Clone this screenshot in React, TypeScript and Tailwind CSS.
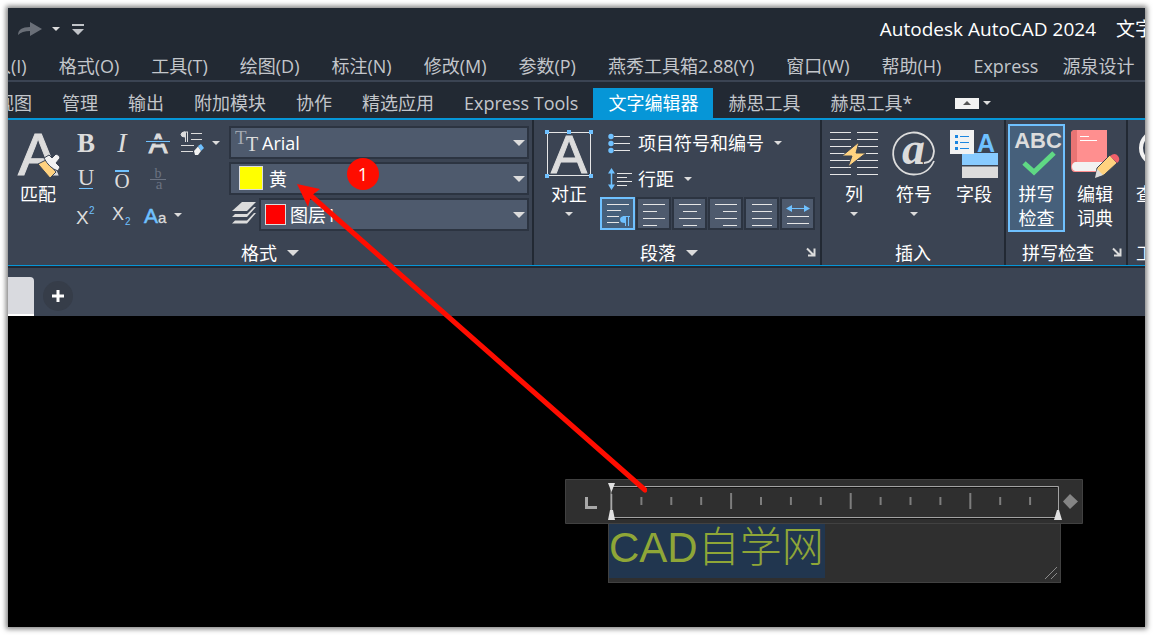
import type { ReactNode } from 'react'
import clsx from 'clsx'

const menus = ['插入(I)', '格式(O)', '工具(T)', '绘图(D)', '标注(N)', '修改(M)', '参数(P)', '燕秀工具箱2.88(Y)', '窗口(W)', '帮助(H)', 'Express']

const tabs = ['视图', '管理', '输出', '附加模块', '协作', '精选应用', 'Express Tools', '文字编辑器', '赫思工具', '赫思工具*']

const SANS = 'Liberation Sans, Arial, sans-serif'
const SERIF = 'Liberation Serif, Times New Roman, serif'

function Caret({ large = false, className }: { large?: boolean; className?: string }) {
  return (
    <svg
      aria-hidden="true"
      viewBox="0 0 12 6"
      className={clsx('shrink-0 fill-[#dcdcdc]', large ? 'w-3 h-1.5' : 'w-2 h-1', className)}
    >
      <path d="M0 0H12L6 6Z" />
    </svg>
  )
}

function Launcher() {
  return (
    <button type="button" aria-label="更多设置" className="absolute right-1 bottom-2 w-2.5 h-2.5">
      <svg viewBox="0 0 10 10" className="w-2.5 h-2.5" fill="none" stroke="#dcdcdc" strokeWidth="2">
        <path d="M1 1.5L7.5 8M8.5 1.5V8.5H2" />
      </svg>
    </button>
  )
}

function Panel({ title, caret, launcher, className, children }: {
  title: string
  caret?: boolean
  launcher?: boolean
  className?: string
  children: ReactNode
}) {
  return (
    <section className={clsx('relative flex flex-col shrink-0 h-[145px] pt-1', className)}>
      <div className="flex flex-1 items-start">{children}</div>
      <div className={clsx('flex items-center justify-center gap-2.5 h-6 leading-6 text-white', launcher && 'pr-4')}>
        <span className="whitespace-nowrap">{title}</span>
        {caret && <Caret large />}
      </div>
      {launcher && <Launcher />}
    </section>
  )
}

function LargeButton({ icon, lines, caret, active, className }: {
  icon: ReactNode
  lines: string[]
  caret?: boolean
  active?: boolean
  className?: string
}) {
  return (
    <button
      type="button"
      className={clsx(
        'flex flex-col items-center shrink-0 h-[108px] pt-1 border-2',
        active ? 'border-[#6fc1ff] bg-[#46607b]' : 'border-transparent',
        className,
      )}
    >
      {icon}
      <span className="flex flex-col mt-1 leading-6 text-white whitespace-nowrap">
        {lines.map((line) => (
          <span key={line}>{line}</span>
        ))}
      </span>
      {caret && <Caret className="mt-1.5" />}
    </button>
  )
}

function Big({ children }: { children: ReactNode }) {
  return (
    <svg aria-hidden="true" viewBox="0 0 48 48" className="w-12 h-12 shrink-0 overflow-visible">
      {children}
    </svg>
  )
}

function Tool({ label, children }: { label: string; children: ReactNode }) {
  return (
    <button type="button" aria-label={label} className="flex items-center justify-center h-9">
      <svg aria-hidden="true" viewBox="0 0 24 24" className="w-6 h-6 overflow-visible" fill="#dcdcdc">
        {children}
      </svg>
    </button>
  )
}

function Combo({ id, label, value, icon, pad }: {
  id: string
  label: string
  value: string
  icon?: ReactNode
  pad: string
}) {
  return (
    <div className="relative grow shrink-0 h-[33px]">
      <label htmlFor={id} className="sr-only">{label}</label>
      <select
        id={id}
        className={clsx('w-full h-full appearance-none border-2 border-[#2c3441] bg-[#4e5a6d] text-white leading-6', pad)}
      >
        <option>{value}</option>
      </select>
      {icon}
      <Caret large className="absolute right-1 top-3.5 pointer-events-none" />
    </div>
  )
}

function AlignButton({ label, active, children }: { label: string; active?: boolean; children: ReactNode }) {
  return (
    <button
      type="button"
      aria-label={label}
      className={clsx(
        'flex items-center justify-center w-[35px] h-[33px] border-2',
        active ? 'border-[#6fc1ff] bg-[#46607b]' : 'border-[#2c3441] bg-[#4e5a6d]',
      )}
    >
      <svg aria-hidden="true" viewBox="0 0 24 24" className="w-6 h-6 shrink-0" stroke="#e6e6e6" fill="none">
        {children}
      </svg>
    </button>
  )
}

function FormatPanel() {
  return (
    <Panel title="格式" caret className="w-[526px]">
      <LargeButton
        className="w-[60px]"
        lines={['匹配']}
        icon={
          <Big>
            <text x="4" y="45" fontFamily={SANS} fontSize="60" fill="#dcdcdc" stroke="#dcdcdc">A</text>
            <path d="M24 34L32 30L42 42L36 48Z" fill="#ffd27f" stroke="#3b4453" />
            <path d="M30 28L35 25L38 28L42 24Q46 25 46 28L42 33L46 37L44 41Q35 38 30 28Z" fill="#f2f2f2" stroke="#3b4453" />
          </Big>
        }
      />
      <div className="grid grid-cols-[36px_36px_36px_53px] pt-px">
        <Tool label="粗体">
          <text x="12" y="21" textAnchor="middle" fontFamily={SERIF} fontSize="27" fontWeight="700">B</text>
        </Tool>
        <Tool label="斜体">
          <text x="12" y="21" textAnchor="middle" fontFamily={SERIF} fontSize="28" fontStyle="italic">I</text>
        </Tool>
        <Tool label="删除线">
          <text x="12" y="22" textAnchor="middle" fontFamily={SANS} fontSize="28" stroke="#dcdcdc">A</text>
          <path d="M0 8.5H24V12.5H0Z" fill="#3b4453" />
          <path d="M0 10H24V11H0Z" fill="#6fc1ff" />
        </Tool>
        <button type="button" aria-label="清除格式" className="flex items-center gap-2 h-9 pl-1">
          <svg aria-hidden="true" viewBox="0 0 24 24" className="w-6 h-6 shrink-0" fill="none" stroke="#dcdcdc">
            <path d="M3.5 1H8M5.500 1V11M7.500 1V11M11 2.500H22M11 8.500H22M1 14.500H14M1 20.500H13" />
            <path d="M5 1Q1 1 1 3.500T5 6Z" fill="#dcdcdc" />
            <path d="M18 15L21 13L24 17L21 20Z" fill="#6fc1ff" stroke="none" />
            <path d="M14 20L18 15.500L21 20L18 24H15Z" fill="#f2f2f2" stroke="none" />
          </svg>
          <Caret />
        </button>
        <Tool label="下划线">
          <text x="12" y="18" textAnchor="middle" fontFamily={SERIF} fontSize="23">U</text>
          <path d="M5 21H19V22H5Z" fill="#6fc1ff" />
        </Tool>
        <Tool label="上划线">
          <text x="12" y="21" textAnchor="middle" fontFamily={SERIF} fontSize="21">O</text>
          <path d="M5 3H19V5H5Z" fill="#6fc1ff" />
        </Tool>
        <Tool label="堆叠">
          <g fill="#6b7382">
            <text x="12" y="11" textAnchor="middle" fontFamily={SERIF} fontSize="14">b</text>
            <path d="M4 12H20V13H4Z" />
            <text x="13" y="22" textAnchor="middle" fontFamily={SERIF} fontSize="15">a</text>
          </g>
        </Tool>
        <span />
        <Tool label="上标">
          <text x="2" y="21" fontFamily={SANS} fontSize="19">X</text>
          <text x="15" y="11" fontFamily={SANS} fontSize="10" fill="#6fc1ff">2</text>
        </Tool>
        <Tool label="下标">
          <text x="2" y="17" fontFamily={SANS} fontSize="18">X</text>
          <text x="15" y="22" fontFamily={SANS} fontSize="10" fill="#6fc1ff">2</text>
        </Tool>
        <button type="button" aria-label="更改大小写" className="flex items-center gap-1.5 h-9 pl-1">
          <svg aria-hidden="true" viewBox="0 0 24 24" className="w-6 h-6 shrink-0 overflow-visible">
            <text x="0" y="20" fontFamily={SANS} fontSize="21" fill="#6fc1ff" stroke="#6fc1ff" strokeWidth="0.5">A</text>
            <text x="14" y="20" fontFamily={SANS} fontSize="15" fill="#dcdcdc" stroke="#dcdcdc" strokeWidth="0.3">a</text>
          </svg>
          <Caret />
        </button>
      </div>
      <div className="flex flex-col flex-1 gap-[3px] pt-0.5 pr-[3px]">
        <Combo
          id="font"
          label="字体"
          value="Arial"
          pad="pl-[31px]"
          icon={
            <svg aria-hidden="true" viewBox="0 0 24 24" className="absolute left-1.5 top-1 w-6 h-6 pointer-events-none">
              <text x="0" y="14" fontFamily={SERIF} fontSize="19" fill="#a3a9b3">T</text>
              <text x="11" y="21" fontFamily={SERIF} fontSize="20" fill="#dcdcdc">T</text>
            </svg>
          }
        />
        <Combo
          id="color"
          label="颜色"
          value="黄"
          pad="pl-[38px]"
          icon={<span className="absolute left-2.5 top-1 size-6 border border-[#dcdcdc] bg-[#ffff00] pointer-events-none" />}
        />
        <div className="flex">
          <svg aria-hidden="true" viewBox="0 0 24 24" className="w-6 h-6 mx-[3px] mt-1" fill="#dcdcdc">
            <path d="M10 0H24L15 9H0Z" />
            <path d="M0 15L3 12H15L22 5H24L15 15Z" />
            <path d="M0 21.500L3 18.500H15L22 11H24L15 21.500Z" />
          </svg>
          <Combo
            id="layer"
            label="图层"
            value="图层1"
            pad="pl-[29px]"
            icon={<span className="absolute left-1.5 top-1.5 size-[21px] border border-[#dcdcdc] bg-[#ff0000] pointer-events-none" />}
          />
        </div>
      </div>
    </Panel>
  )
}

function ParagraphPanel() {
  return (
    <Panel title="段落" caret launcher className="w-[288px]">
      <LargeButton
        className="w-[62px] ml-1"
        lines={['对正']}
        caret
        icon={
          <Big>
            <text x="24" y="43" textAnchor="middle" fontFamily={SANS} fontSize="54" fill="#dcdcdc" stroke="#dcdcdc">A</text>
            <path d="M2.500 2.500H45.500V45.500H2.500Z" fill="none" stroke="#e6e6e6" />
            <path d="M0 0h4v4H0zM22 0h4v4h-4zM44 0h4v4h-4zM0 44h4v4H0zM44 44h4v4h-4z" fill="#6fc1ff" />
          </Big>
        }
      />
      <div className="flex flex-col pt-px">
        <button type="button" className="flex items-center h-9 pl-2 text-white">
          <svg aria-hidden="true" viewBox="0 0 24 24" className="w-6 h-6 mr-1.5">
            <path d="M6 5.500H22M6 12.500H22M6 19.500H22" stroke="#e6e6e6" />
            <circle cx="3" cy="5.500" r="2.700" fill="#6fc1ff" />
            <circle cx="3" cy="12.500" r="2.700" fill="#6fc1ff" />
            <circle cx="3" cy="19.500" r="2.700" fill="#6fc1ff" />
          </svg>
          项目符号和编号
          <Caret className="ml-2.5" />
        </button>
        <button type="button" className="flex items-center h-9 pl-2 text-white">
          <svg aria-hidden="true" viewBox="0 0 24 24" className="w-6 h-6 mr-1.5">
            <path d="M9 6.500H24M9 10.500H19M9 14.500H24M9 18.500H19" stroke="#e6e6e6" />
            <path d="M3.500 4V20" stroke="#6fc1ff" strokeWidth="1.500" />
            <path d="M0 6.500L3.500 1L7 6.500ZM0 17.500L3.500 23L7 17.500Z" fill="#6fc1ff" />
          </svg>
          行距
          <Caret className="ml-2.5" />
        </button>
        <div className="flex gap-px">
          <AlignButton label="默认" active>
            <path d="M1 2.500H23M1 8.500H15M1 14.500H13M1 20.500H13" />
            <path d="M17 14.500H24M19.500 15V25M22.500 15V25" stroke="#6fc1ff" />
            <path d="M19 14Q14 14 14 17.500T19 21Z" fill="#6fc1ff" stroke="none" />
          </AlignButton>
          <AlignButton label="左对齐">
            <path d="M1 2.500H23M1 9.500H15M1 16.500H23M1 23.500H15" />
          </AlignButton>
          <AlignButton label="居中">
            <path d="M1 2.500H23M5 9.500H19M1 16.500H23M5 23.500H19" />
          </AlignButton>
          <AlignButton label="右对齐">
            <path d="M1 2.500H23M9 9.500H23M1 16.500H23M9 23.500H23" />
          </AlignButton>
          <AlignButton label="对正">
            <path d="M2 2.500H22M2 9.500H22M2 16.500H22M2 23.500H22" />
          </AlignButton>
          <AlignButton label="分散对齐">
            <path d="M1 14.500H23M1 21.500H23" />
            <path d="M4 6.500H20" stroke="#6fc1ff" />
            <path d="M0 6.500L6 3V10ZM24 6.500L18 3V10Z" fill="#6fc1ff" stroke="none" />
          </AlignButton>
        </div>
      </div>
    </Panel>
  )
}

function InsertPanel() {
  return (
    <Panel title="插入" className="w-[184px]">
      <LargeButton
        className="w-[60px] ml-0.5"
        lines={['列']}
        caret
        icon={
          <Big>
            <path
              d="M0 2.500H21M27 2.500H48M0 9.500H21M27 9.500H48M0 16.500H21M27 16.500H48M0 23.500H21M27 23.500H48M0 30.500H21M27 30.500H48M0 37.500H21M27 37.500H48M0 44.500H21M27 44.500H48"
              stroke="#e6e6e6"
            />
            <path d="M29 12L12 26H22L18 37L36 23H26Z" fill="#ffd27f" stroke="#3b4453" />
          </Big>
        }
      />
      <LargeButton
        className="w-[60px]"
        lines={['符号']}
        caret
        icon={
          <Big>
            <path d="M44 31Q38 44.500 24 44.500A20.500 21 0 1 1 44 21Q43 33 34 33" fill="none" stroke="#dcdcdc" strokeWidth="1.800" />
            <text x="12" y="34" fontFamily={SERIF} fontSize="46" fontWeight="700" fontStyle="italic" fill="#dcdcdc">a</text>
          </Big>
        }
      />
      <LargeButton
        className="w-[60px]"
        lines={['字段']}
        icon={
          <Big>
            <path d="M12 23H48V48H12Z" fill="#dcdcdc" />
            <path d="M12 23H48V35H12Z" fill="#88cbff" />
            <path d="M12 35H48V36.500H12Z" fill="#3b4453" />
            <path d="M0 0H24V24H0Z" fill="#f2f2f2" />
            <path d="M5 5h3v3H5zM5 11h3v3H5zM5 17h3v3H5z" fill="#1c86e0" />
            <path d="M10 6.500H19M10 12.500H19M10 18.500H19" stroke="#1c86e0" />
            <text x="36" y="22" textAnchor="middle" fontFamily={SANS} fontSize="25" fontWeight="700" fill="#6fc1ff">A</text>
          </Big>
        }
      />
    </Panel>
  )
}

function SpellPanel() {
  return (
    <Panel title="拼写检查" launcher className="w-[122px]">
      <LargeButton
        className="w-[57px] ml-0.5"
        active
        lines={['拼写', '检查']}
        icon={
          <Big>
            <text x="25" y="18" textAnchor="middle" fontFamily={SANS} fontSize="22" fontWeight="700" fill="#dcdcdc">ABC</text>
            <path d="M11 33L21 42L41 23" fill="none" stroke="#5fd884" strokeWidth="5" />
          </Big>
        }
      />
      <LargeButton
        className="w-[60px]"
        lines={['编辑', '词典']}
        icon={
          <Big>
            <path d="M4 0H36V42H4Q0 42 0 37V4Q0 0 4 0Z" fill="#ff8f8f" />
            <path d="M4 0H6V32Q1 32 0 37V4Q0 0 4 0Z" fill="#e87474" />
            <path d="M4 32H36V41H4Q1 40 1 36.500T4 32Z" fill="#f2f2f2" />
            <path d="M9 6.500H18M9 10.500H26" stroke="#ffffff" />
            <path d="M24 48L26 38L39 25L46 33L33 45Z" fill="#ffd27f" stroke="#3b4453" />
            <path d="M24 48L26 39L32 45Z" fill="#dcdcdc" />
            <path d="M39 26Q44 22 47 26T46 33Z" fill="#f0606a" />
          </Big>
        }
      />
    </Panel>
  )
}

function Ruler() {
  const ticks = Array.from({ length: 14 }, (_, i) => i + 1)
  return (
    <svg aria-hidden="true" viewBox="0 0 518 45" className="block w-[518px] h-[45px] overflow-visible">
      <path d="M0.500 0.500H517.500V44.500H0.500Z" fill="#2f2f2f" stroke="#414141" />
      <path d="M47 8.500H492M47 39.500H492" stroke="#151515" />
      <path d="M46 7.500H493.500V38.500H46Z" fill="none" stroke="#a3a3a3" />
      <path d="M21.500 18V28.500H32" fill="none" stroke="#a8a8a8" strokeWidth="3" />
      <path d="M46.500 15V33" stroke="#a8a8a8" strokeWidth="1.500" />
      {ticks.map((n) => (
        <path
          key={n}
          d={n % 4 === 0 ? `M${46.500 + n * 29.900} 14V30` : `M${46.500 + n * 29.900} 18V26`}
          stroke="#7d7d7d"
          strokeWidth="2"
        />
      ))}
      <path d="M43 4H50L46.500 13ZM43 41H50L48 31H45ZM489 41H497L494 31H492Z" fill="#e0e0e0" />
      <path d="M505 15L513 22.500L505 30L498 22.500Z" fill="#858585" />
    </svg>
  )
}

export default function App() {
  return (
    <div className="flex min-h-screen p-2 bg-white">
      <div className="relative flex flex-col flex-1 min-w-0 overflow-hidden font-['Open_Sans','Noto_Sans_CJK_SC',sans-serif] text-[18px] leading-6 text-[#c3c6cb] bg-[#222933] shadow-[0_0_5px_2px_rgba(0,0,0,0.5)]">
        {/* Title bar */}
        <header className="flex items-center h-11 pl-2.5 pb-0.5 overflow-hidden whitespace-nowrap">
          <button type="button" aria-label="重做" className="w-6">
            <svg viewBox="0 0 24 14" className="w-6 h-3.5" fill="#6a6f78">
              <path d="M0 13Q0 5 12 5V0L24 7L12 14V9Q4 9 0 13Z" />
            </svg>
          </button>
          <Caret className="ml-2.5" />
          <button type="button" aria-label="自定义快速访问工具栏" className="ml-3">
            <svg viewBox="0 0 12 11" className="w-3 h-[11px]" fill="#c0c3c8">
              <path d="M0 0H12V2H0ZM0 5H12L6 11Z" />
            </svg>
          </button>
          <h1 className="ml-auto text-[19px] text-white">Autodesk AutoCAD 2024</h1>
          <span className="w-[29px] ml-5 text-[19px] text-white">文字</span>
        </header>

        {/* Menu bar */}
        <nav className="flex items-center h-[30px] -ml-[33px] pb-px gap-8 border-b-2 border-[#3b4453] whitespace-nowrap">
          {menus.map((menu) => (
            <button type="button" key={menu}>{menu}</button>
          ))}
          <button type="button" className="-ml-2">源泉设计</button>
        </nav>

        {/* Ribbon tabs */}
        <nav className="flex items-end h-9 -ml-[27px] whitespace-nowrap">
          {tabs.map((tab) => (
            <button
              type="button"
              key={tab}
              className={clsx('h-[30px] px-[15px]', tab === '文字编辑器' && 'bg-[#0696d7] text-white')}
            >
              {tab}
            </button>
          ))}
          <div className="flex items-center gap-1 h-[30px] ml-7">
            <button type="button" aria-label="最小化功能区" className="flex items-center justify-center w-6 h-[11px] bg-[#f2f2f2]">
              <svg viewBox="0 0 8 4" className="w-2 h-1" fill="#555555">
                <path d="M0 4H8L4 0Z" />
              </svg>
            </button>
            <Caret />
          </div>
        </nav>

        {/* Ribbon */}
        <div className="border-t-2 border-b border-[#0696d7]">
          <div className="flex divide-x-2 divide-[#222933] overflow-hidden bg-[#3b4453]">
            <FormatPanel />
            <ParagraphPanel />
            <InsertPanel />
            <SpellPanel />
            <Panel title="工具" className="w-[52px]">
              <LargeButton
                className="w-[52px]"
                lines={['查找']}
                icon={
                  <Big>
                    <circle cx="27" cy="18" r="16" fill="none" stroke="#f2f2f2" strokeWidth="4" />
                  </Big>
                }
              />
            </Panel>
          </div>
        </div>

        {/* File tabs */}
        <div className="flex items-end gap-[9px] h-[50px] border-t-2 border-[#222933] bg-[#3b4453]">
          <button type="button" aria-label="当前图形" className="w-[26px] h-[39px] rounded-tr-sm border-b-2 border-white bg-[#d9dadf]" />
          <button type="button" aria-label="新图形" className="flex items-center justify-center size-[30px] mb-[5px] rounded-full bg-[#363d49]">
            <svg viewBox="0 0 12 12" className="w-3 h-3" stroke="#ffffff" strokeWidth="3">
              <path d="M6 0V12M0 6H12" />
            </svg>
          </button>
        </div>

        {/* Drawing area */}
        <main className="relative flex-1 min-h-[311px] bg-black">
          <div className="absolute left-[557px] top-[163px]">
            <Ruler />
            <div className="relative w-[453px] h-[59px] ml-[43px] border border-t-0 border-[#414141] bg-[#2f2f2f]">
              <input
                aria-label="多行文字"
                defaultValue="CAD自学网"
                className="block w-[216px] h-[54px] pb-4 bg-[#21364f] text-[42px] leading-[38px] font-light text-[#8fa637] font-['Liberation_Sans','Noto_Sans_CJK_SC',sans-serif] outline-none"
              />
              <svg aria-hidden="true" viewBox="0 0 14 14" className="absolute right-0.5 bottom-0.5 w-3.5 h-3.5" stroke="#8a8a8a">
                <path d="M1 13L13 1M7 13L13 7" />
              </svg>
            </div>
          </div>
        </main>

        {/* Callout pointing from the ruler to the colour list */}
        <svg
          aria-hidden="true"
          viewBox="0 0 350 310"
          className="absolute left-[289px] top-[175px] w-[350px] h-[310px] pointer-events-none"
        >
          <path d="M12 11L348 307" stroke="#ff0d00" strokeWidth="5" strokeLinecap="round" />
          <path d="M0 0L23 5L14 12L11 23Z" transform="translate(0 1)" fill="#ff0d00" />
        </svg>
        <span className="absolute left-[339px] top-[150px] flex items-center justify-center size-8 rounded-full bg-[#ff0d00] text-white">
          1
        </span>
      </div>
    </div>
  )
}
